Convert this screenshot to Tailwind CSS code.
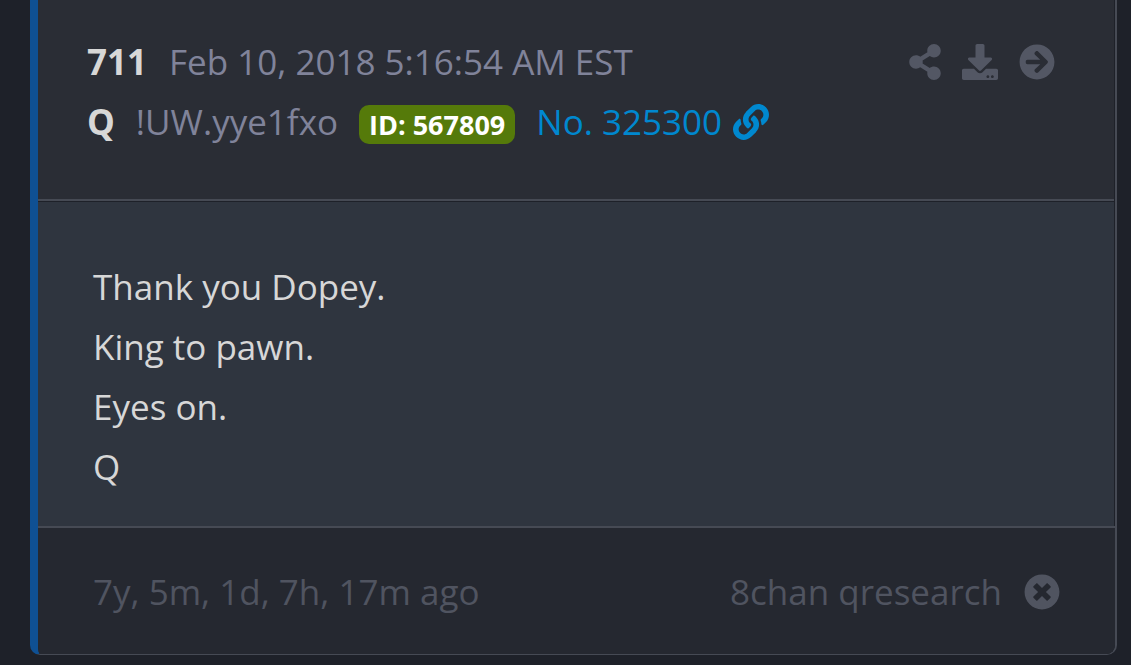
<!doctype html>
<html lang="en">
  <head>
    <meta charset="UTF-8" />
    <meta name="viewport" content="width=device-width, initial-scale=1.0" />
    <script src="https://cdn.jsdelivr.net/npm/@tailwindcss/browser@4"></script>
    <title>711</title>
  </head>
  <body
    class="min-h-screen bg-[#1e2129] pl-[30px] pr-[14px] font-['Open_Sans','Noto_Sans',sans-serif] text-[35px]/[60px] text-[#d7d7d7]"
  >
    <article
      class="overflow-hidden rounded-b-[10px] border-b border-l-8 border-r-2 border-b-[#464a54] border-l-[#0f5093] border-r-[#464a54] bg-[#1e2129]"
    >
      <!-- Post header -->
      <header
        class="mr-px border-b-2 border-[#464a54] bg-[#2a2d35] pt-8 pr-[59px] pb-[47px] pl-[49px]"
      >
        <div class="flex items-center justify-between">
          <div class="flex gap-[22px]">
            <h2 class="font-bold">711</h2>
            <time class="text-[#80839a]" datetime="2018-02-10T05:16:54-05:00"
              >Feb 10, 2018 5:16:54 AM EST</time
            >
          </div>
          <div class="flex items-center gap-[21px] text-[#535764]">
            <button type="button" aria-label="Share">
              <svg class="h-9 w-8" viewBox="0 0 448 512" fill="currentColor">
                <path
                  d="M352 320c-22.608 0-43.387 7.819-59.79 20.895l-102.486-64.054a96.551 96.551 0 0 0 0-41.683l102.486-64.054C308.613 184.181 329.392 192 352 192c53.019 0 96-42.981 96-96S405.019 0 352 0s-96 42.981-96 96c0 7.158.79 14.13 2.276 20.841L155.79 180.895C139.387 167.819 118.608 160 96 160c-53.019 0-96 42.981-96 96s42.981 96 96 96c22.608 0 43.387-7.819 59.79-20.895l102.486 64.054A96.301 96.301 0 0 0 256 416c0 53.019 42.981 96 96 96s96-42.981 96-96-42.981-96-96-96z"
                />
              </svg>
            </button>
            <button type="button" aria-label="Download">
              <svg class="size-9" viewBox="0 0 512 512" fill="currentColor">
                <path
                  d="M216 0h80c13.3 0 24 10.7 24 24v168h87.7c17.8 0 26.7 21.5 14.1 34.1L269.7 378.3c-7.5 7.5-19.8 7.5-27.3 0L90.1 226.1c-12.6-12.6-3.7-34.1 14.1-34.1H192V24c0-13.3 10.7-24 24-24zm296 376v112c0 13.3-10.7 24-24 24H24c-13.3 0-24-10.7-24-24V376c0-13.3 10.7-24 24-24h146.7l49 49c20.1 20.1 52.5 20.1 72.6 0l49-49H488c13.3 0 24 10.7 24 24zm-124 88c0-11-9-20-20-20s-20 9-20 20 9 20 20 20 20-9 20-20zm64 0c0-11-9-20-20-20s-20 9-20 20 9 20 20 20 20-9 20-20z"
                />
              </svg>
            </button>
            <button type="button" aria-label="Go to post">
              <svg class="size-9" viewBox="0 0 512 512" fill="currentColor">
                <path
                  d="M256 8c137 0 248 111 248 248S393 504 256 504 8 393 8 256 119 8 256 8zm-28.9 143.6l75.5 72.4H120c-13.3 0-24 10.7-24 24v16c0 13.3 10.7 24 24 24h182.6l-75.5 72.4c-9.7 9.3-9.9 24.8-.4 34.3l11 10.9c9.4 9.4 24.6 9.4 33.9 0L404.3 273c9.4-9.4 9.4-24.6 0-33.9L271.6 106.3c-9.4-9.4-24.6-9.4-33.9 0l-11 10.9c-9.5 9.6-9.3 25.1.4 34.4z"
                />
              </svg>
            </button>
          </div>
        </div>
        <div class="flex items-center gap-[21px]">
          <span class="font-bold">Q</span>
          <span class="text-[#80839a]">!UW.yye1fxo</span>
          <span
            class="mt-1 rounded-[10px] bg-[#557a0a] px-[10px] text-[27px]/[39px] font-bold text-white"
            >ID: 567809</span
          >
          <a href="#325300" class="flex items-center gap-[11px] text-[#0088cf]">
            No. 325300
            <svg class="size-9" viewBox="0 0 512 512" fill="currentColor">
              <path
                d="M326.612 185.391c59.747 59.809 58.927 155.698.36 214.59-.11.12-.24.25-.36.37l-67.2 67.2c-59.27 59.27-155.699 59.262-214.96 0-59.27-59.26-59.27-155.7 0-214.96l37.106-37.106c9.84-9.84 26.786-3.3 27.294 10.606.648 17.722 3.826 35.527 9.69 52.721 1.986 5.822.567 12.262-3.783 16.612l-13.087 13.087c-28.026 28.026-28.905 73.66-1.155 101.96 28.024 28.579 74.086 28.749 102.325.51l67.2-67.19c28.191-28.191 28.073-73.757 0-101.83-3.701-3.694-7.429-6.564-10.341-8.569a16.037 16.037 0 0 1-6.947-12.606c-.396-10.567 3.348-21.456 11.698-29.806l21.054-21.055c5.521-5.521 14.182-6.199 20.584-1.731a152.482 152.482 0 0 1 20.522 17.197zM467.547 44.449c-59.261-59.262-155.69-59.27-214.96 0l-67.2 67.2c-.12.12-.25.25-.36.37-58.566 58.892-59.387 154.781.36 214.59a152.454 152.454 0 0 0 20.521 17.196c6.402 4.468 15.064 3.789 20.584-1.731l21.054-21.055c8.35-8.35 12.094-19.239 11.698-29.806a16.037 16.037 0 0 0-6.947-12.606c-2.912-2.005-6.64-4.875-10.341-8.569-28.073-28.073-28.191-73.639 0-101.83l67.2-67.19c28.239-28.239 74.3-28.069 102.325.51 27.75 28.3 26.872 73.934-1.155 101.96l-13.087 13.087c-4.35 4.35-5.769 10.79-3.783 16.612 5.864 17.194 9.042 34.999 9.69 52.721.509 13.906 17.454 20.446 27.294 10.606l37.106-37.106c59.271-59.259 59.271-155.699.001-214.959z"
              />
            </svg>
          </a>
        </div>
      </header>

      <!-- Post body -->
      <div class="mt-px mr-px bg-[#2f353f] px-[55px] pt-[55px] pb-[29px]">
        <p>Thank you Dopey.</p>
        <p>King to pawn.</p>
        <p>Eyes on.</p>
        <p>Q</p>
      </div>

      <!-- Post footer -->
      <footer
        class="flex items-center justify-between border-t-2 border-[#464a54] bg-[#252830] px-[55px] pt-[34px] pb-8 text-[#505460]"
      >
        <span>7y, 5m, 1d, 7h, 17m ago</span>
        <div class="flex items-center gap-[22px]">
          <span>8chan qresearch</span>
          <button type="button" aria-label="Close">
            <svg class="size-9" viewBox="0 0 512 512" fill="currentColor">
              <path
                d="M256 8C119 8 8 119 8 256s111 248 248 248 248-111 248-248S393 8 256 8zm121.6 313.1c4.7 4.7 4.7 12.3 0 17L338 377.6c-4.7 4.7-12.3 4.7-17 0L256 312l-65.1 65.6c-4.7 4.7-12.3 4.7-17 0L134.4 338c-4.7-4.7-4.7-12.3 0-17l65.6-65-65.6-65.1c-4.7-4.7-4.7-12.3 0-17l39.6-39.6c4.7-4.7 12.3-4.7 17 0l65 65.7 65.1-65.6c4.7-4.7 12.3-4.7 17 0l39.6 39.6c4.7 4.7 4.7 12.3 0 17L312 256l65.6 65.1z"
              />
            </svg>
          </button>
        </div>
      </footer>
    </article>
  </body>
</html>
